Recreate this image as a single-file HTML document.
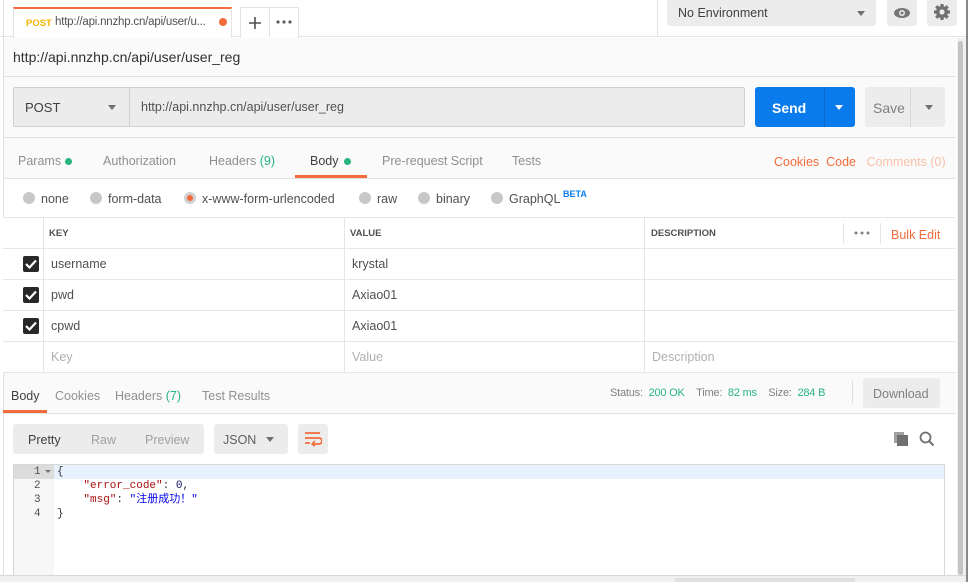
<!DOCTYPE html>
<html><head><meta charset="utf-8"><style>
*{box-sizing:border-box;margin:0;padding:0}
body{width:977px;height:582px;overflow:hidden;background:#fff;font-family:"Liberation Sans","Noto Sans CJK SC",sans-serif;font-size:12px;color:#505050;position:relative}
.a{position:absolute}
.g{color:#26b47f}
.o{color:#f26b3a}
.radio{position:absolute;width:12px;height:12px;border-radius:50%;background:#c8c8c8;top:192px}
.tx{position:absolute;top:192px;font-size:12.5px;color:#505050}
.cb{position:absolute;left:23px;width:16px;height:16px;background:#282828;border-radius:2px}
.cb svg{position:absolute;left:2px;top:3px}
.row{position:absolute;left:3px;width:952px;height:31px;border-bottom:1px solid #e6e6e6;background:#fff}
.cell{position:absolute;top:8px;font-size:12.5px;color:#505050}
.t{position:absolute;top:154px;font-size:12.5px;color:#909090}
</style></head><body>
<div class="a" style="left:0;top:0;width:966px;height:37px;background:#fff;border-bottom:1px solid #e3e3e3"></div>
<div class="a" style="left:3px;top:0;width:1px;height:582px;background:#e0e0e0"></div>
<div class="a" style="left:13px;top:7px;width:219px;height:31px;background:#fff;border:1px solid #e3e3e3;border-top:2px solid #f26b3a;border-bottom:none"></div>
<div class="a" style="left:26px;top:18px;font-size:9.5px;font-weight:bold;color:#f4b400">POST</div>
<div class="a" style="left:55px;top:16px;font-size:11.5px;color:#505050;letter-spacing:-0.2px">http://api.nnzhp.cn/api/user/u...</div>
<div class="a" style="left:219px;top:18px;width:8px;height:8px;border-radius:50%;background:#f26b3a"></div>
<div class="a" style="left:240px;top:7px;width:59px;height:31px;border:1px solid #e3e3e3;border-bottom:none;background:#fff"></div>
<div class="a" style="left:269px;top:7px;width:1px;height:30px;background:#e3e3e3"></div>
<svg class="a" style="left:248px;top:16px" width="14" height="14"><path d="M7 1V13M1 7H13" stroke="#505050" stroke-width="1.6"/></svg>
<svg class="a" style="left:276px;top:20px" width="16" height="4"><circle cx="2" cy="2" r="1.6" fill="#606060"/><circle cx="8" cy="2" r="1.6" fill="#606060"/><circle cx="14" cy="2" r="1.6" fill="#606060"/></svg>
<div class="a" style="left:657px;top:0;width:1px;height:37px;background:#e3e3e3"></div>
<div class="a" style="left:667px;top:0;width:209px;height:26px;background:#ececec;border-radius:0 0 3px 3px"></div>
<div class="a" style="left:678px;top:6px;font-size:12.5px;color:#404040">No Environment</div>
<div class="a" style="left:857px;top:11px;border-left:4px solid transparent;border-right:4px solid transparent;border-top:5px solid #707070"></div>
<div class="a" style="left:887px;top:0;width:30px;height:26px;background:#ececec;border-radius:0 0 3px 3px"></div>
<svg class="a" style="left:893px;top:6px" width="18" height="14"><ellipse cx="9" cy="7" rx="8" ry="5" fill="#777"/><circle cx="9" cy="7" r="3" fill="#ececec"/><circle cx="9" cy="7" r="1.5" fill="#777"/></svg>
<div class="a" style="left:927px;top:0;width:30px;height:26px;background:#ececec;border-radius:0 0 3px 3px"></div>
<svg class="a" style="left:933px;top:3px" width="18" height="18" viewBox="0 0 18 18"><g fill="#707070"><circle cx="9" cy="9" r="6"/><g stroke="#707070" stroke-width="3.2"><path d="M9 1V17M1 9H17M3.3 3.3L14.7 14.7M14.7 3.3L3.3 14.7"/></g></g><circle cx="9" cy="9" r="2.6" fill="#ececec"/></svg>
<div class="a" style="left:966px;top:0;width:2px;height:582px;background:#888"></div>
<div class="a" style="left:4px;top:38px;width:952px;height:537px;background:#fafafa"></div>
<div class="a" style="left:957px;top:38px;width:9px;height:537px;background:#f0f0f0"></div>
<div class="a" style="left:958px;top:41px;width:5px;height:534px;background:#c4c4c4;border-radius:3px"></div>
<div class="a" style="left:13px;top:49px;font-size:14px;color:#303030">http://api.nnzhp.cn/api/user/user_reg</div>
<div class="a" style="left:4px;top:76px;width:952px;height:1px;background:#e3e3e3"></div>
<div class="a" style="left:13px;top:87px;width:732px;height:40px;background:#ececec;border:1px solid #d0d0d0;border-radius:2px"></div>
<div class="a" style="left:129px;top:88px;width:1px;height:38px;background:#d0d0d0"></div>
<div class="a" style="left:25px;top:100px;font-size:13px;color:#404040">POST</div>
<div class="a" style="left:108px;top:105px;border-left:4px solid transparent;border-right:4px solid transparent;border-top:5px solid #707070"></div>
<div class="a" style="left:141px;top:100px;font-size:12.5px;color:#505050">http://api.nnzhp.cn/api/user/user_reg</div>
<div class="a" style="left:755px;top:87px;width:100px;height:40px;background:#097bed;border-radius:3px"></div>
<div class="a" style="left:824px;top:87px;width:1px;height:40px;background:#0a6ad0"></div>
<div class="a" style="left:772px;top:100px;font-size:14px;font-weight:bold;color:#fff">Send</div>
<div class="a" style="left:835px;top:105px;border-left:4px solid transparent;border-right:4px solid transparent;border-top:5px solid #fff"></div>
<div class="a" style="left:865px;top:87px;width:80px;height:40px;background:#ececec;border-radius:3px"></div>
<div class="a" style="left:910px;top:87px;width:1px;height:40px;background:#d8d8d8"></div>
<div class="a" style="left:873px;top:100px;font-size:14px;color:#808080">Save</div>
<div class="a" style="left:925px;top:105px;border-left:4px solid transparent;border-right:4px solid transparent;border-top:5px solid #707070"></div>
<div class="a" style="left:4px;top:137px;width:952px;height:1px;background:#e3e3e3"></div>
<div class="t" style="left:18px">Params</div>
<div class="a" style="left:65px;top:158px;width:7px;height:7px;border-radius:50%;background:#26b47f"></div>
<div class="t" style="left:103px">Authorization</div>
<div class="t" style="left:209px">Headers <span class="g">(9)</span></div>
<div class="t" style="left:310px;color:#404040">Body</div>
<div class="a" style="left:344px;top:158px;width:7px;height:7px;border-radius:50%;background:#26b47f"></div>
<div class="a" style="left:295px;top:175px;width:72px;height:3px;background:#f26b3a"></div>
<div class="t" style="left:382px">Pre-request Script</div>
<div class="t" style="left:512px">Tests</div>
<div class="a" style="left:774px;top:155px;font-size:12.5px"><span class="o">Cookies</span>&nbsp;&nbsp;<span class="o">Code</span>&nbsp;&nbsp;&nbsp;<span style="color:#f8c0aa">Comments (0)</span></div>
<div class="a" style="left:4px;top:178px;width:952px;height:1px;background:#e3e3e3"></div>
<div class="a" style="left:4px;top:179px;width:952px;height:38px;background:#fff"></div>
<div class="radio" style="left:23px"></div><div class="tx" style="left:41px">none</div>
<div class="radio" style="left:90px"></div><div class="tx" style="left:108px">form-data</div>
<div class="radio" style="left:184px;background:#d0d0d0"><div style="position:absolute;left:3px;top:3px;width:6px;height:6px;border-radius:50%;background:#f26b3a"></div></div><div class="tx" style="left:202px">x-www-form-urlencoded</div>
<div class="radio" style="left:359px"></div><div class="tx" style="left:377px">raw</div>
<div class="radio" style="left:418px"></div><div class="tx" style="left:436px">binary</div>
<div class="radio" style="left:491px"></div><div class="tx" style="left:509px">GraphQL</div>
<div class="a" style="left:563px;top:189px;font-size:9px;font-weight:bold;color:#097bed">BETA</div>
<div class="a" style="left:3px;top:217px;width:952px;height:1px;background:#e6e6e6"></div>
<div class="row" style="top:218px"></div>
<div class="a" style="left:49px;top:228px;font-size:9.5px;font-weight:bold;color:#505050">KEY</div>
<div class="a" style="left:350px;top:228px;font-size:9.5px;font-weight:bold;color:#505050">VALUE</div>
<div class="a" style="left:651px;top:228px;font-size:9.5px;font-weight:bold;color:#505050">DESCRIPTION</div>
<div class="a" style="left:843px;top:223px;width:1px;height:21px;background:#e6e6e6"></div>
<div class="a" style="left:880px;top:223px;width:1px;height:21px;background:#e6e6e6"></div>
<svg class="a" style="left:854px;top:231px" width="16" height="4"><circle cx="2" cy="2" r="1.5" fill="#808080"/><circle cx="8" cy="2" r="1.5" fill="#808080"/><circle cx="14" cy="2" r="1.5" fill="#808080"/></svg>
<div class="a o" style="left:891px;top:228px;font-size:12.5px">Bulk Edit</div>
<div class="row" style="top:249px"><div class="cell" style="left:48px">username</div><div class="cell" style="left:349px">krystal</div></div>
<div class="row" style="top:280px"><div class="cell" style="left:48px">pwd</div><div class="cell" style="left:349px">Axiao01</div></div>
<div class="row" style="top:311px"><div class="cell" style="left:48px">cpwd</div><div class="cell" style="left:349px">Axiao01</div></div>
<div class="row" style="top:342px"><div class="cell" style="left:48px;color:#b0b0b0">Key</div><div class="cell" style="left:349px;color:#b0b0b0">Value</div><div class="cell" style="left:649px;color:#b0b0b0">Description</div></div>
<div class="cb" style="top:256px"><svg width="12" height="10"><path d="M1 5 L4.5 8.5 L11 1.5" stroke="#fff" stroke-width="2.2" fill="none"/></svg></div>
<div class="cb" style="top:287px"><svg width="12" height="10"><path d="M1 5 L4.5 8.5 L11 1.5" stroke="#fff" stroke-width="2.2" fill="none"/></svg></div>
<div class="cb" style="top:318px"><svg width="12" height="10"><path d="M1 5 L4.5 8.5 L11 1.5" stroke="#fff" stroke-width="2.2" fill="none"/></svg></div>
<div class="a" style="left:43px;top:218px;width:1px;height:155px;background:#e6e6e6"></div>
<div class="a" style="left:344px;top:218px;width:1px;height:155px;background:#e6e6e6"></div>
<div class="a" style="left:644px;top:218px;width:1px;height:155px;background:#e6e6e6"></div>
<div class="a" style="left:11px;top:389px;font-size:12.5px;color:#404040">Body</div>
<div class="a" style="left:55px;top:389px;font-size:12.5px;color:#909090">Cookies</div>
<div class="a" style="left:115px;top:389px;font-size:12.5px;color:#909090">Headers <span class="g">(7)</span></div>
<div class="a" style="left:202px;top:389px;font-size:12.5px;color:#909090">Test Results</div>
<div class="a" style="left:3px;top:410px;width:44px;height:3px;background:#f26b3a"></div>
<div class="a" style="left:4px;top:413px;width:952px;height:1px;background:#e3e3e3"></div>
<div class="a" style="left:610px;top:387px;font-size:11px;color:#808080;letter-spacing:-0.2px">Status:&nbsp; <span class="g">200 OK</span>&nbsp;&nbsp;&nbsp;&nbsp;Time:&nbsp; <span class="g">82 ms</span>&nbsp;&nbsp;&nbsp;&nbsp;Size:&nbsp; <span class="g">284 B</span></div>
<div class="a" style="left:852px;top:381px;width:1px;height:23px;background:#ddd"></div>
<div class="a" style="left:863px;top:378px;width:77px;height:30px;background:#ececec;border-radius:3px"></div>
<div class="a" style="left:873px;top:387px;font-size:12.5px;color:#808080">Download</div>
<div class="a" style="left:4px;top:414px;width:952px;height:161px;background:#fff"></div>
<div class="a" style="left:13px;top:424px;width:191px;height:30px;background:#ececec;border-radius:3px"></div>
<div class="a" style="left:28px;top:433px;font-size:12.5px;color:#404040">Pretty</div>
<div class="a" style="left:91px;top:433px;font-size:12.5px;color:#a0a0a0">Raw</div>
<div class="a" style="left:145px;top:433px;font-size:12.5px;color:#a0a0a0">Preview</div>
<div class="a" style="left:214px;top:424px;width:74px;height:30px;background:#ececec;border-radius:3px"></div>
<div class="a" style="left:223px;top:433px;font-size:12.5px;color:#606060">JSON</div>
<div class="a" style="left:266px;top:437px;border-left:4px solid transparent;border-right:4px solid transparent;border-top:5px solid #707070"></div>
<div class="a" style="left:298px;top:424px;width:30px;height:30px;background:#ececec;border-radius:3px"></div>
<svg class="a" style="left:304px;top:431px" width="18" height="16"><path d="M1 2H16M1 7H15a3 3 0 0 1 0 6H9M1 12H6" stroke="#f26b3a" stroke-width="1.8" fill="none"/><path d="M11 10L8 13L11 15" stroke="#f26b3a" stroke-width="1.5" fill="none"/></svg>
<svg class="a" style="left:893px;top:431px" width="16" height="16"><rect x="1" y="1" width="10" height="11" fill="#a0a0a0"/><rect x="4" y="4" width="11" height="11" fill="#707070"/></svg>
<svg class="a" style="left:919px;top:431px" width="16" height="16"><circle cx="6.5" cy="6.5" r="5" stroke="#707070" stroke-width="1.8" fill="none"/><path d="M10 10L14.5 14.5" stroke="#707070" stroke-width="2"/></svg>
<div class="a" style="left:13px;top:464px;width:932px;height:112px;border:1px solid #d8d8d8;border-bottom:none;background:#fff"></div>
<div class="a" style="left:14px;top:465px;width:40px;height:111px;background:#f7f7f7"></div>
<div class="a" style="left:14px;top:465px;width:40px;height:14px;background:#dcdcdc"></div>
<div class="a" style="left:54px;top:465px;width:890px;height:14px;background:#e8f2fe"></div>
<div class="a" style="left:0;top:465px;font-family:'Liberation Mono','Noto Sans CJK SC',monospace;font-size:11px;line-height:14px;color:#505050">
<div style="position:absolute;left:34px;width:10px">1</div><div style="position:absolute;left:45px;top:5px;border-left:3px solid transparent;border-right:3px solid transparent;border-top:3px solid #707070"></div>
<div style="position:absolute;left:34px;top:14px">2</div><div style="position:absolute;left:34px;top:28px">3</div><div style="position:absolute;left:34px;top:42px">4</div>
<div style="position:absolute;left:57px;top:0;color:#333;white-space:pre">{</div>
<div style="position:absolute;left:57px;top:14px;white-space:pre">    <span style="color:#a11">"error_code"</span><span style="color:#333">:</span> <span style="color:#116">0</span><span style="color:#333">,</span></div>
<div style="position:absolute;left:57px;top:28px;white-space:pre">    <span style="color:#a11">"msg"</span><span style="color:#333">:</span> <span style="color:#00e">"注册成功！"</span></div>
<div style="position:absolute;left:57px;top:42px;color:#333">}</div>
</div>
<div class="a" style="left:0;top:575px;width:966px;height:7px;background:#f0f0f0;border-top:1px solid #d8d8d8"></div>
<div class="a" style="left:675px;top:578px;width:180px;height:4px;background:#e0e0e0"></div>
</body></html>
